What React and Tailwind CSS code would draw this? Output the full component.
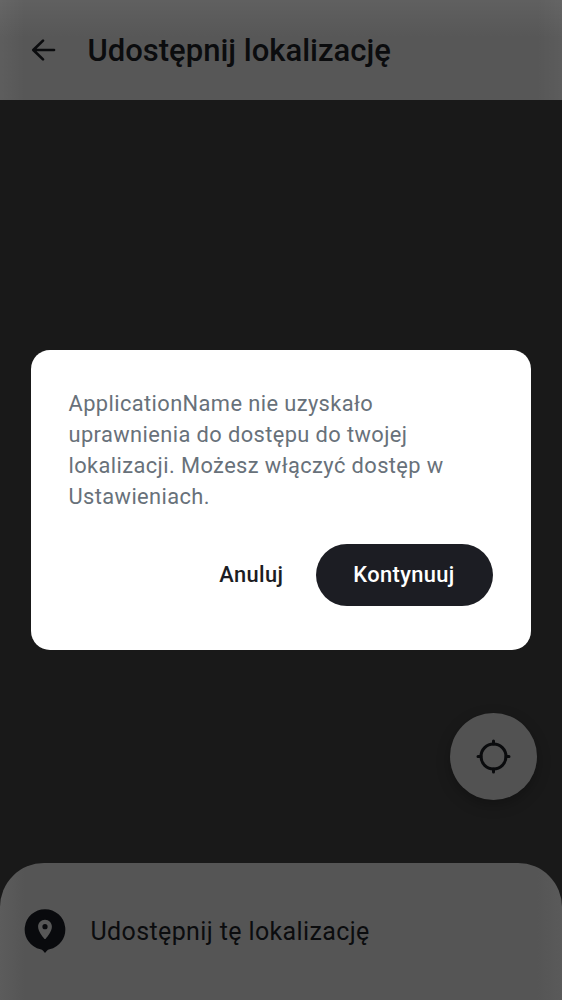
function BackArrow() {
  return (
    <svg className="h-6 w-7 shrink-0" viewBox="0 0 28 24" fill="none" stroke="#0b0c0e" strokeWidth="2.7" strokeLinecap="round" strokeLinejoin="round">
      <path d="M24 12H3.500M13 2.600L3.300 12l9.700 9.400" />
    </svg>
  );
}

function PinBadge() {
  return (
    <svg className="h-[46px] w-[42px] shrink-0" viewBox="0 0 42 46">
      <path fill="#090a0d" d="M21 .2a20.3 20.3 0 0 0-4.5 40.1c1.1.2 2 .8 2.800 1.700l1.700 1.900 1.700-1.900c.8-.9 1.700-1.500 2.800-1.700A20.300 20.300 0 0 0 21 .2z" />
      <path fill="#575757" fillRule="evenodd" d="M21 10.800c-3.900 0-6.900 3-6.900 6.900 0 4.700 4.600 9.900 6.200 12 .4.500 1 .5 1.400 0 1.600-2.100 6.200-7.300 6.200-12 0-3.900-3-6.900-6.900-6.900zm0 4.300a2.600 2.600 0 1 1 0 5.200 2.600 2.600 0 0 1 0-5.200z" />
    </svg>
  );
}

function Crosshair() {
  return (
    <svg className="size-9" viewBox="0 0 36 36" fill="none" stroke="#0a0b0d" strokeWidth="3" strokeLinecap="round">
      <circle cx="17.500" cy="17.500" r="12.500" />
      <path d="M17.500 2v3M17.500 30v3M2 17.500h3M30 17.500h3" />
    </svg>
  );
}

export default function App() {
  return (
    <div className="relative flex h-[1000px] w-[562px] flex-col overflow-hidden bg-[#191919] font-[Roboto,sans-serif] text-[#0b0c0e]">
      <header className="flex h-[100px] shrink-0 items-center bg-[#575757] bg-[linear-gradient(90deg,rgba(255,255,255,0.04),transparent_25px,transparent_537px,rgba(255,255,255,0.03)),linear-gradient(180deg,rgba(255,255,255,0.055),transparent_38px)] pl-[30px]">
        <BackArrow />
        <h1 className="ml-[29.500px] pt-px text-[31px] leading-10 font-medium whitespace-nowrap">Udostępnij lokalizację</h1>
      </header>
      <main className="flex flex-1 items-end justify-end pr-[25px] pb-[63px]">
        <button className="flex size-[87px] items-center justify-center rounded-full bg-[#525252] shadow-[0_5px_14px_rgba(0,0,0,0.25)]">
          <Crosshair />
        </button>
      </main>
      <footer className="flex h-[137px] shrink-0 items-center rounded-t-[44px] bg-[linear-gradient(90deg,#5c5c5c,#555555_25px,#555555_537px,#5a5a5a)] pl-6">
        <PinBadge />
        <span className="ml-[24.500px] text-[25px] leading-8 tracking-[0.380px] whitespace-nowrap">Udostępnij tę lokalizację</span>
      </footer>
      <div className="absolute inset-0 flex items-center justify-center">
        <div role="dialog" className="h-[300px] w-[500px] rounded-[19px] bg-white px-[37.500px] pt-[37.500px]">
          <p className="text-[21.850px] leading-[31.200px] tracking-[0.400px] text-[#68717a]">
            ApplicationName nie uzyskało<br />uprawnienia do dostępu do twojej<br />lokalizacji. Możesz włączyć dostęp w<br />Ustawieniach.
          </p>
          <div className="mt-8 flex items-center justify-end gap-8 pr-px text-[21.850px] font-medium tracking-[0.390px]">
            <button className="text-[#1c1d23]">Anuluj</button>
            <button className="h-[62px] w-[177px] rounded-full bg-[#1c1d23] text-white">Kontynuuj</button>
          </div>
        </div>
      </div>
    </div>
  );
}
